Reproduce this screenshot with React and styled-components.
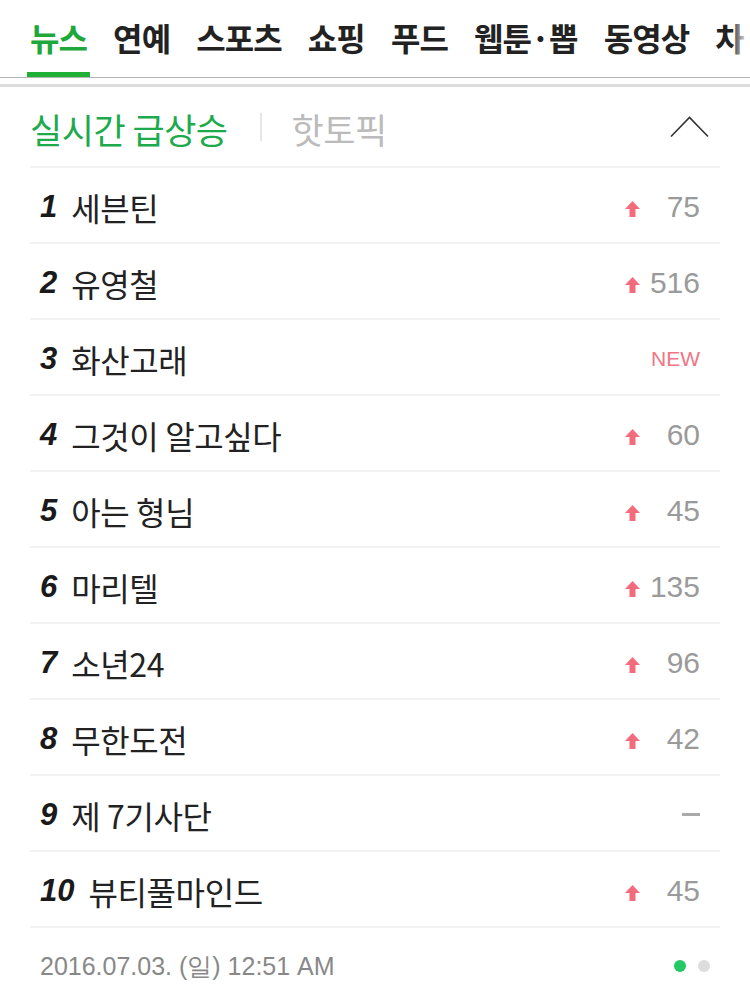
import React from "react";
import styled, { createGlobalStyle } from "styled-components";

const GlobalStyle = createGlobalStyle`
  html, body {
    margin: 0;
    padding: 0;
    background: #fff;
  }
  body {
    font-family: "Noto Sans CJK KR", "Liberation Sans", sans-serif;
    -webkit-font-smoothing: antialiased;
  }
`;

const tabs = ["뉴스", "연예", "스포츠", "쇼핑", "푸드", "웹툰·뽑", "동영상", "차·B"];

const ranks = [
  { name: "세븐틴", type: "up", value: "75" },
  { name: "유영철", type: "up", value: "516" },
  { name: "화산고래", type: "new" },
  { name: "그것이 알고싶다", type: "up", value: "60" },
  { name: "아는 형님", type: "up", value: "45" },
  { name: "마리텔", type: "up", value: "135" },
  { name: "소년24", type: "up", value: "96" },
  { name: "무한도전", type: "up", value: "42" },
  { name: "제 7기사단", type: "same" },
  { name: "뷰티풀마인드", type: "up", value: "45" },
];

export default function App() {
  return (
    <Page>
      <GlobalStyle />
      <TabBar>
        <TabList>
          {tabs.map((t, i) => (
            <Tab key={t} $active={i === 0}>
              {t}
            </Tab>
          ))}
        </TabList>
        <Fade />
      </TabBar>
      <Panel>
        <Header>
          <HeaderTitle $active>실시간 급상승</HeaderTitle>
          <Divider />
          <HeaderTitle>핫토픽</HeaderTitle>
          <Toggle>
            <svg width="40" height="22" viewBox="0 0 40 22">
              <polyline
                points="1,20.5 19.5,1.5 38,20.5"
                fill="none"
                stroke="#333"
                strokeWidth="1.6"
              />
            </svg>
          </Toggle>
        </Header>
        <List>
          {ranks.map((r, i) => (
            <Row key={r.name}>
              <Rank>{i + 1}</Rank>
              <Keyword>{r.name}</Keyword>
              <Change>
                {r.type === "up" && (
                  <>
                    <UpArrow viewBox="0 0 15 16">
                      <path d="M7.5 0 L15 8 L10.5 8 L10.5 16 L4.5 16 L4.5 8 L0 8 Z" fill="#f46c7c" />
                    </UpArrow>
                    <Count>{r.value}</Count>
                  </>
                )}
                {r.type === "new" && <NewTag>NEW</NewTag>}
                {r.type === "same" && <Dash />}
              </Change>
            </Row>
          ))}
        </List>
        <Footer>
          <Stamp>2016.07.03. (일) 12:51 AM</Stamp>
          <Dots>
            <Dot $on />
            <Dot />
          </Dots>
        </Footer>
      </Panel>
    </Page>
  );
}

const Page = styled.div`
  width: 750px;
  min-height: 992px;
  background: #fff;
  overflow: hidden;
`;

const TabBar = styled.nav`
  position: relative;
  height: 77px;
  border-bottom: 1px solid #b5b5b5;
  overflow: hidden;
`;

const TabList = styled.ul`
  display: flex;
  gap: 20px;
  margin: 0;
  padding: 0 0 0 27px;
  list-style: none;
  white-space: nowrap;
`;

const Tab = styled.li`
  height: 77px;
  box-sizing: border-box;
  padding: 17px 3px 0;
  font-size: 32px;
  font-weight: 700;
  letter-spacing: -0.9px;
  line-height: 40px;
  color: ${({ $active }) => ($active ? "#1ea83c" : "#222")};
  border-bottom: 5px solid ${({ $active }) => ($active ? "#1fb035" : "transparent")};
`;

const Fade = styled.div`
  position: absolute;
  top: 0;
  right: 0;
  width: 14px;
  height: 70px;
  background: linear-gradient(to right, rgba(255, 255, 255, 0.3), #fff 90%);
`;

const Panel = styled.section`
  margin-top: 6px;
  border-top: 3px solid #dcdcdc;
  padding: 0 30px;
`;

const Header = styled.div`
  display: flex;
  align-items: center;
  height: 79px;
  border-bottom: 2px solid #f1f1f1;
`;

const HeaderTitle = styled.h2`
  margin: 0;
  padding-top: 4px;
  font-size: 35px;
  font-weight: 400;
  letter-spacing: -0.5px;
  color: ${({ $active }) => ($active ? "#1daa4c" : "#bbb")};
`;

const Divider = styled.span`
  width: 2px;
  height: 28px;
  margin: 0 30px 0 32px;
  background: #e6e6e6;
`;

const Toggle = styled.button`
  margin-left: auto;
  margin-right: 10px;
  padding: 0;
  border: 0;
  background: none;
  display: flex;
  align-items: center;
`;

const List = styled.ol`
  margin: 0;
  padding: 0;
  list-style: none;
`;

const Row = styled.li`
  display: flex;
  align-items: center;
  padding: 3px 20px 0 10px;
  box-sizing: border-box;
  height: 76px;
  border-bottom: 2px solid #f1f1f1;
`;

const Rank = styled.span`
  font-family: "Liberation Sans", sans-serif;
  font-size: 31px;
  font-weight: 700;
  font-style: italic;
  color: #1a1a1a;
  margin-right: 14px;
`;

const Keyword = styled.span`
  font-size: 32px;
  font-weight: 400;
  letter-spacing: -0.4px;
  color: #222;
`;

const Change = styled.div`
  margin-left: auto;
  display: flex;
  align-items: center;
  justify-content: flex-end;
`;

const UpArrow = styled.svg`
  width: 15px;
  height: 16px;
  margin-top: 4px;
`;

const Count = styled.span`
  width: 60px;
  text-align: right;
  font-family: "Liberation Sans", sans-serif;
  font-size: 30px;
  color: #9a9a9a;
`;

const NewTag = styled.span`
  font-family: "Liberation Sans", sans-serif;
  font-size: 21px;
  color: #f07585;
`;

const Dash = styled.span`
  width: 18px;
  height: 3px;
  background: #aaa;
`;

const Footer = styled.footer`
  display: flex;
  align-items: center;
  height: 64px;
  padding: 12px 10px 0;
  box-sizing: border-box;
`;

const Stamp = styled.span`
  font-family: "Liberation Sans", sans-serif;
  font-size: 25px;
  color: #888;
`;

const Dots = styled.div`
  margin-left: auto;
  display: flex;
  gap: 12px;
`;

const Dot = styled.span`
  width: 12px;
  height: 12px;
  border-radius: 50%;
  background: ${({ $on }) => ($on ? "#22c964" : "#ddd")};
`;
